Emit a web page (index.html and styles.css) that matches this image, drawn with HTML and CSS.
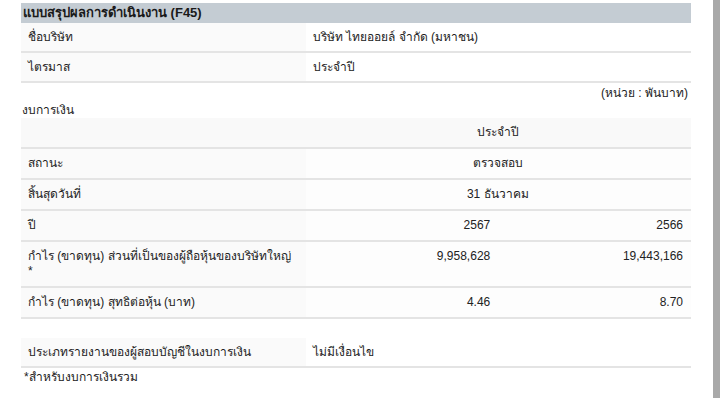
FILE: index.html
```html
<!DOCTYPE html>
<html lang="th">
<head>
<meta charset="utf-8">
<link rel="stylesheet" href="styles.css">
</head>
<body>
<div class="page">
  <div class="main">
    <div class="title">แบบสรุปผลการดำเนินงาน (F45)</div>
    <table class="info">
      <tr><td class="lbl">ชื่อบริษัท</td><td class="val">บริษัท ไทยออยล์ จำกัด (มหาชน)</td></tr>
      <tr><td class="lbl">ไตรมาส</td><td class="val">ประจำปี</td></tr>
    </table>
    <div class="unit">(หน่วย : พันบาท)</div>
    <div class="section">งบการเงิน</div>
    <table class="fin">
      <tr><td class="lbl"></td><td class="ctr" colspan="2">ประจำปี</td></tr>
      <tr><td class="lbl">สถานะ</td><td class="ctr" colspan="2">ตรวจสอบ</td></tr>
      <tr><td class="lbl">สิ้นสุดวันที่</td><td class="ctr" colspan="2">31 ธันวาคม</td></tr>
      <tr><td class="lbl">ปี</td><td class="num">2567</td><td class="num">2566</td></tr>
      <tr><td class="lbl">กำไร (ขาดทุน) ส่วนที่เป็นของผู้ถือหุ้นของบริษัทใหญ่ *</td><td class="num">9,958,628</td><td class="num">19,443,166</td></tr>
      <tr><td class="lbl">กำไร (ขาดทุน) สุทธิต่อหุ้น (บาท)</td><td class="num">4.46</td><td class="num">8.70</td></tr>
    </table>
    <table class="info audit">
      <tr><td class="lbl">ประเภทรายงานของผู้สอบบัญชีในงบการเงิน</td><td class="val">ไม่มีเงื่อนไข</td></tr>
    </table>
    <div class="note">*สำหรับงบการเงินรวม</div>
  </div>
  <div class="scroll"></div>
</div>
</body>
</html>
```

FILE: styles.css
```css
html, body {
  margin: 0;
  padding: 0;
  background: #ffffff;
}
body {
  font-family: "Liberation Sans", "Noto Sans", sans-serif;
  font-size: 12px;
  color: #222222;
}
.page {
  display: flex;
  height: 398px;
}
.main {
  width: 670px;
  margin-left: 21px;
  padding-top: 3px;
}
.scroll {
  margin-left: auto;
  width: 7px;
  background: #a9a9a9;
}
.title {
  background: #c4ccd3;
  font-weight: bold;
  font-size: 13px;
  height: 20px;
  line-height: 20px;
  padding-left: 2px;
  color: #1a1a1a;
}
table {
  border-collapse: collapse;
  width: 100%;
}
td {
  padding: 7px 8px 7px 7px;
  line-height: 15px;
  border-bottom: 2px solid #e4e4e4;
  vertical-align: top;
}
.info td { padding-top: 7px; padding-bottom: 6px; }
.lbl {
  width: 270px;
  background: #fafafa;
}
.info .val {
  background: #ffffff;
}
.unit {
  text-align: right;
  padding-right: 3px;
  margin-top: 3px;
  line-height: 15px;
}
.section {
  line-height: 15px;
  margin-top: 2px;
  margin-left: 1px;
}
.fin tr:first-child td { background: #f9f9f9; }
.ctr { text-align: center; background: #fdfdfd; }
.num { text-align: right; background: #fdfdfd; width: 178px; }
.audit {
  margin-top: 19px;
}
.note {
  margin-top: 2px;
  margin-left: 3px;
  line-height: 15px;
}
```
